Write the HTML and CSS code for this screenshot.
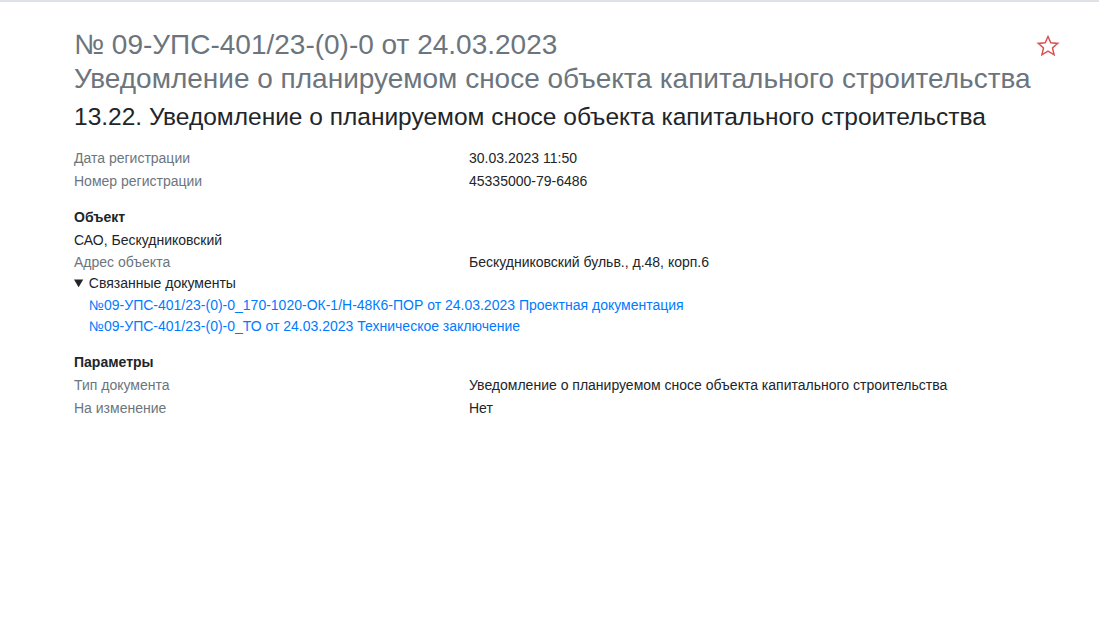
FILE: index.html
```html
<!DOCTYPE html>
<html lang="ru">
<head>
    <meta charset="UTF-8">
    <title>№ 09-УПС-401/23-(0)-0 от 24.03.2023</title>
    <link rel="stylesheet" href="styles.css">
</head>
<body>
    <div class="page">
        <div class="doc-header">
            <div class="titles">
                <h1 class="doc-number">№ 09-УПС-401/23-(0)-0 от 24.03.2023</h1>
                <h1 class="doc-name">Уведомление о планируемом сносе объекта капитального строительства</h1>
                <h2 class="doc-kind">13.22. Уведомление о планируемом сносе объекта капитального строительства</h2>
            </div>
            <button class="fav" title="В избранное">
                <svg width="24" height="24" viewBox="0 0 24 24">
                    <path d="M12 2.5l2.8 6.3 6.9.6-5.2 4.6 1.6 6.8L12 17.2l-6.1 3.6 1.6-6.8-5.2-4.6 6.9-.6z" fill="none" stroke="#d9534f" stroke-width="1.5" stroke-linejoin="miter"/>
                </svg>
            </button>
        </div>

        <div class="section first">
            <div class="row"><div class="label">Дата регистрации</div><div class="value">30.03.2023 11:50</div></div>
            <div class="row"><div class="label">Номер регистрации</div><div class="value">45335000-79-6486</div></div>
        </div>

        <div class="section">
            <div class="section-title">Объект</div>
            <div class="plain">САО, Бескудниковский</div>
            <div class="row tight"><div class="label">Адрес объекта</div><div class="value">Бескудниковский бульв., д.48, корп.6</div></div>
            <details class="related" open>
                <summary>Связанные документы</summary>
                <a href="#">№09-УПС-401/23-(0)-0_170-1020-ОК-1/Н-48К6-ПОР от 24.03.2023 Проектная документация</a>
                <a href="#">№09-УПС-401/23-(0)-0_ТО от 24.03.2023 Техническое заключение</a>
            </details>
        </div>

        <div class="section params">
            <div class="section-title">Параметры</div>
            <div class="row"><div class="label">Тип документа</div><div class="value">Уведомление о планируемом сносе объекта капитального строительства</div></div>
            <div class="row"><div class="label">На изменение</div><div class="value">Нет</div></div>
        </div>
    </div>
</body>
</html>
```

FILE: styles.css
```css
body {
    margin: 0;
    padding: 0;
    background-color: #fff;
    font-family: "Liberation Sans", Arial, sans-serif;
    font-size: 14px;
    color: #212529;
    border-top: 2px solid #dee2e6;
}
.page {
    padding: 26px 39px 0 74px;
}
.doc-header {
    display: flex;
    justify-content: space-between;
    align-items: flex-start;
}
.doc-number,
.doc-name {
    margin: 0;
    font-size: 28px;
    font-weight: normal;
    line-height: 34px;
    color: #6c757d;
}
.doc-kind {
    margin: 6px 0 0 0;
    font-size: 24.5px;
    font-weight: normal;
    line-height: 30px;
    color: #212529;
}
.fav {
    border: none;
    background: none;
    padding: 0;
    margin: 6px 0 0 0;
    cursor: pointer;
}
.fav svg {
    display: block;
}
.section {
    margin-top: 13px;
}
.section.first {
    margin-top: 15px;
}
.section.params {
    margin-top: 14px;
}
.row {
    display: grid;
    grid-template-columns: 395px 1fr;
    line-height: 23px;
}
.row.tight {
    line-height: 22px;
}
.label {
    color: #6c757d;
}
.section-title {
    font-weight: bold;
    line-height: 23px;
}
.plain {
    line-height: 22px;
}
.related summary {
    line-height: 21px;
    cursor: pointer;
}
.related a {
    display: block;
    margin-left: 15px;
    line-height: 21px;
    color: #007bff;
    text-decoration: none;
}
.related summary + a {
    margin-top: 1px;
}
.related a:hover {
    text-decoration: underline;
}
```
